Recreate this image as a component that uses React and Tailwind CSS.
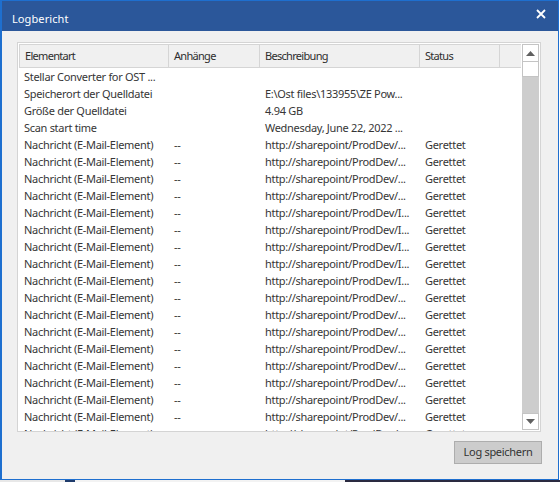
import React from "react";

const font = { fontFamily: '"Noto Sans", "Open Sans", sans-serif' };

const info = [
  ["Stellar Converter for OST  ...", "", "", ""],
  ["Speicherort der Quelldatei", "", "E:\\Ost files\\133955\\ZE Pow...", ""],
  ["Größe der Quelldatei", "", "4.94 GB", ""],
  ["Scan start time", "", "Wednesday, June 22, 2022 ...", ""],
];

// which message rows show the "I..." link
const withI = [4, 5, 6, 7, 8];
const messages = Array.from({ length: 18 }, (_, i) => [
  "Nachricht (E-Mail-Element)",
  "--",
  withI.includes(i) ? "http://sharepoint/ProdDev/I..." : "http://sharepoint/ProdDev/...",
  "Gerettet",
]);

const rows = [...info, ...messages];

function HeaderCell({ w, children }) {
  return (
    <div
      className={`${w} h-full shrink-0 border-r border-[#d5d5d5] pl-[5px] flex items-center text-[11px] tracking-[-0.7px] text-[#2e2e2e]`}
    >
      {children}
    </div>
  );
}

export default function App() {
  return (
    <div className="w-[560px] h-[482px] bg-white overflow-hidden" style={font}>
      <div className="w-[559px] h-[480px] border border-[#1e6fcf] border-l-2 flex flex-col bg-[#f0f0f0]">
        {/* title bar */}
        <div className="h-[30px] shrink-0 bg-[#2b579a] flex items-center justify-between pl-[10px] pr-[12px]">
          <span className="text-white text-[11px] tracking-[0.1px] pt-[6px]">Logbericht</span>
          <svg width="10" height="10" viewBox="0 0 10 10" className="mb-[4px]">
            <path d="M1 1L9 9M9 1L1 9" stroke="white" strokeWidth="1.8" />
          </svg>
        </div>

        {/* body */}
        <div className="flex-1 flex flex-col pl-[15px] pt-[11px]">
          <div className="w-[524px] h-[390px] border border-[#d4d4d4] bg-white p-px flex overflow-hidden">
            <div className="w-[502px] shrink-0 flex flex-col">
              {/* header */}
              <div className="h-[24px] shrink-0 flex bg-[#f0f0f0] border-b border-t border-l border-[#d5d5d5]">
                <HeaderCell w="w-[149px]">Elementart</HeaderCell>
                <HeaderCell w="w-[91px]">Anhänge</HeaderCell>
                <HeaderCell w="w-[160px]">Beschreibung</HeaderCell>
                <HeaderCell w="w-[80px]">Status</HeaderCell>
                <div className="flex-1" />
              </div>
              {/* rows */}
              <div className="flex flex-col pt-[1px]">
                {rows.map((r, i) => (
                  <div
                    key={i}
                    className="h-[17px] shrink-0 flex items-center text-[11px] tracking-[-0.3px] text-[#363636] whitespace-nowrap"
                  >
                    <div className="w-[150px] pl-[5px] shrink-0">{r[0]}</div>
                    <div className="w-[91px] pl-[5px] shrink-0">{r[1]}</div>
                    <div className="w-[160px] pl-[5px] shrink-0">{r[2]}</div>
                    <div className="w-[80px] pl-[5px] shrink-0">{r[3]}</div>
                  </div>
                ))}
              </div>
            </div>

            {/* scrollbar */}
            <div className="w-[17px] ml-px h-[386px] flex flex-col bg-[#cdcdcd]">
              <div className="h-[18px] bg-white border border-[#c4c4c4] flex items-center justify-center">
                <svg width="9" height="5" viewBox="0 0 9 5">
                  <path d="M0 5L4.5 0L9 5Z" fill="#606060" />
                </svg>
              </div>
              <div className="h-[15px] bg-white border border-t-0 border-[#c4c4c4]" />
              <div className="flex-1" />
              <div className="h-[17px] bg-white border border-[#c4c4c4] flex items-center justify-center">
                <svg width="9" height="5" viewBox="0 0 9 5">
                  <path d="M0 0L4.5 5L9 0Z" fill="#606060" />
                </svg>
              </div>
            </div>
          </div>

          {/* footer */}
          <div className="w-[524px] flex justify-end pt-[9px]">
            <button className="w-[88px] h-[23px] bg-[#cccccc] border border-[#adadad] text-[11px] tracking-[-0.3px] text-[#333] mr-[-1px]">
              Log speichern
            </button>
          </div>
        </div>
      </div>
      {/* sliver of the window behind */}
      <div className="h-[2px] flex">
        <div className="w-[65px] bg-[#e8e8e8]" />
        <div className="w-[10px] bg-[#1f3b6b]" />
        <div className="w-[270px] bg-[#f3f3f3]" />
        <div className="flex-1 bg-[#2a2a40]" />
      </div>
    </div>
  );
}
